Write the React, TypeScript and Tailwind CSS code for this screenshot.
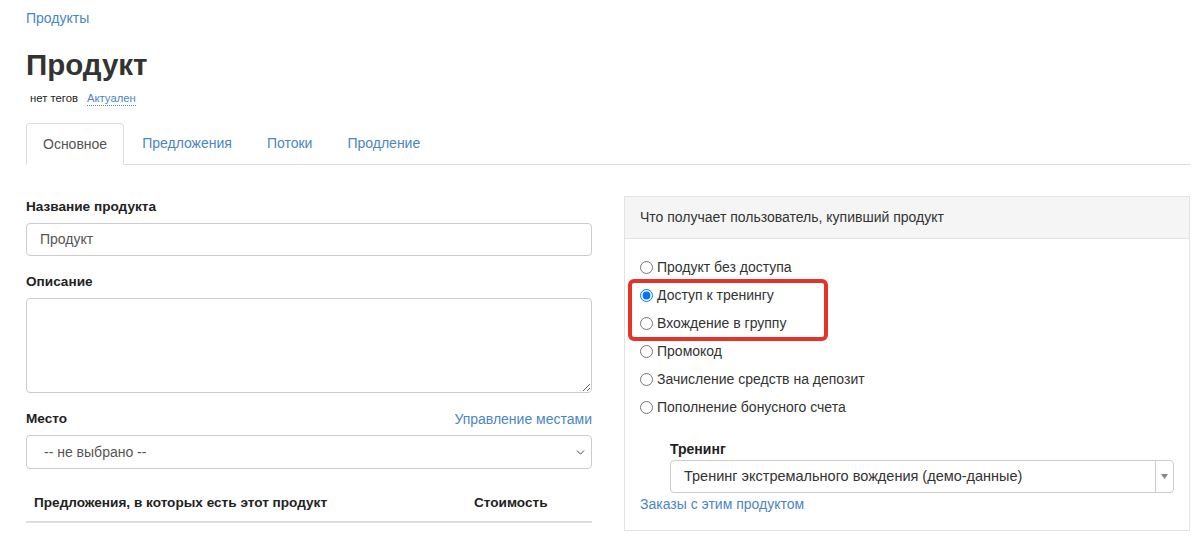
import React from "react";
import { ChevronDown } from "lucide-react";

const options = [
  { label: "Продукт без доступа", checked: false },
  { label: "Доступ к тренингу", checked: true },
  { label: "Вхождение в группу", checked: false },
  { label: "Промокод", checked: false },
  { label: "Зачисление средств на депозит", checked: false },
  { label: "Пополнение бонусного счета", checked: false },
];

export default function App() {
  return (
    <div className="min-h-[536px] bg-white pl-[26px] pr-[10px] pt-[9px] font-['Liberation_Sans',Arial,sans-serif] text-[#333]">
      <a className="block text-[14px] leading-[18px] text-[#4a86c5]">Продукты</a>
      <h1 className="mt-[21px] text-[29.5px] font-bold leading-[34px] text-[#333]">Продукт</h1>
      <div className="mt-[8px] flex items-center gap-[9px] pl-[4px] text-[11.3px] leading-[16px]">
        <span className="text-[#222]">нет тегов</span>
        <span className="border-b border-dotted border-[#4a86c5] leading-[14px] text-[#4a86c5]">Актуален</span>
      </div>

      <div className="mt-[17px] flex h-[42px] items-end border-b border-[#ddd]">
        <div className="-mb-px flex h-[42px] items-center rounded-t-[4px] border border-[#ddd] border-b-white bg-white px-[16px] text-[14px] text-[#555]">
          Основное
        </div>
        <div className="ml-[2px] flex h-[41px] items-center px-[16px] text-[14px] text-[#4a86c5]">Предложения</div>
        <div className="ml-[3px] flex h-[41px] items-center px-[16px] text-[14px] text-[#4a86c5]">Потоки</div>
        <div className="ml-[3px] flex h-[41px] items-center px-[16px] text-[14px] text-[#4a86c5]">Продление</div>
      </div>

      <div className="mt-[31px] grid grid-cols-2 items-start gap-[32px]">
        <div className="pt-[2px]">
          <div className="text-[13.6px] font-bold leading-[18px] text-[#222]">Название продукта</div>
          <div className="mt-[7px] flex h-[33px] items-center rounded-[4px] border border-[#ccc] px-[13px] text-[14px] text-[#555]">
            Продукт
          </div>
          <div className="mt-[17px] text-[13.6px] font-bold leading-[18px] text-[#222]">Описание</div>
          <textarea className="mt-[7px] block h-[95px] w-full resize-y rounded-[4px] border border-[#ccc] outline-none" />
          <div className="mt-[17px] flex items-center justify-between leading-[18px]">
            <span className="text-[13.6px] font-bold text-[#222]">Место</span>
            <a className="text-[14px] text-[#4a86c5]">Управление местами</a>
          </div>
          <div className="mt-[7px] flex h-[34px] items-center justify-between rounded-[4px] border border-[#ccc] pl-[17px] pr-[4px] text-[14px] text-[#555]">
            <span>-- не выбрано --</span>
            <ChevronDown size={13} strokeWidth={1.8} className="text-[#444]" />
          </div>
          <div className="mt-[16px] grid grid-cols-[440px_1fr] border-b-2 border-[#ddd] py-[9px] text-[13.6px] font-bold leading-[18px] text-[#222]">
            <div className="pl-[8px]">Предложения, в которых есть этот продукт</div>
            <div className="pl-[8px]">Стоимость</div>
          </div>
        </div>

        <div className="border border-[#e3e3e3]">
          <div className="flex h-[42px] items-center border-b border-[#e3e3e3] bg-[#f5f5f5] px-[15px] text-[14px] text-[#333]">
            Что получает пользователь, купивший продукт
          </div>
          <div className="relative px-[15px] pb-[17px] pt-[14px]">
            {options.map((o) => (
              <label key={o.label} className="flex h-[28px] items-center gap-[4px] text-[14px] text-[#333]">
                <input type="radio" name="access" defaultChecked={o.checked} className="m-0 h-[13px] w-[13px]" />
                <span>{o.label}</span>
              </label>
            ))}
            <div className="absolute left-[3px] top-[40px] h-[62px] w-[200px] rounded-[6px] border-[4px] border-[#e5332a]" />
            <div className="mt-[19px] pl-[30px]">
              <div className="text-[14px] font-bold leading-[18px] text-[#222]">Тренинг</div>
              <div className="mt-[2px] flex h-[33px] items-stretch rounded-[4px] border border-[#ccc]">
                <div className="flex flex-1 items-center px-[13px] text-[14.5px] text-[#333]">
                  Тренинг экстремального вождения (демо-данные)
                </div>
                <div className="flex w-[18px] items-center justify-center border-l border-[#ccc]">
                  <svg width="7" height="5" viewBox="0 0 7 5">
                    <path d="M0 0 L7 0 L3.5 5 Z" fill="#888" />
                  </svg>
                </div>
              </div>
            </div>
            <a className="mt-[2px] block text-[14px] leading-[18px] text-[#4a86c5]">Заказы с этим продуктом</a>
          </div>
        </div>
      </div>
    </div>
  );
}
